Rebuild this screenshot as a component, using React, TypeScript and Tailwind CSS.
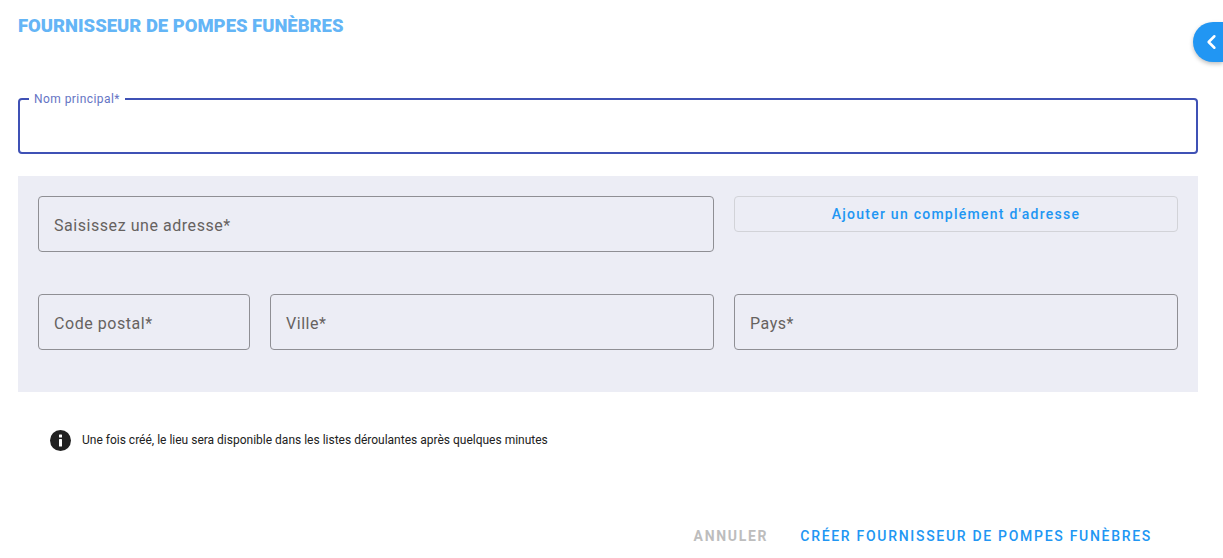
import { ChevronLeft } from "lucide-react";

function Field({ label, className }: { label: string; className: string }) {
  return (
    <div
      className={`h-14 border border-[#8f8f94] rounded pl-[15px] pt-1 flex items-center text-base tracking-[0.55px] text-[#66625f] ${className}`}
    >
      {label}
    </div>
  );
}

export default function App() {
  return (
    <div className="relative h-[558px] overflow-hidden bg-white pl-[18px] pr-[25px] font-['Roboto',sans-serif]">
      <button className="absolute right-0 top-[22px] w-[30px] h-10 rounded-l-full bg-[#2196f3] text-white flex items-center pl-[7px] shadow-[0_2px_4px_rgba(0,0,0,0.25)]">
        <ChevronLeft size={28} strokeWidth={2.6} />
      </button>

      <h1 className="pt-[14px] text-[18.45px] leading-[24px] font-black text-[#64b5f6]">
        FOURNISSEUR DE POMPES FUNÈBRES
      </h1>

      <div className="relative mt-[60px] h-14 border-2 border-[#3f51b5] rounded">
        <span className="absolute left-[9px] -top-[8px] bg-white px-[5px] text-xs leading-[14px] tracking-[0.44px] text-[#6574c4]">
          Nom principal*
        </span>
      </div>

      <div className="mt-[22px] h-[216px] bg-[#ecedf5] p-5">
        <div className="flex gap-5">
          <Field label="Saisissez une adresse*" className="w-[676px]" />
          <button className="h-9 w-[444px] border border-[#d2d3d8] rounded text-sm font-medium tracking-[1.25px] text-[#2196f3]">
            Ajouter un complément d'adresse
          </button>
        </div>
        <div className="flex gap-5 mt-[42px]">
          <Field label="Code postal*" className="w-[212px]" />
          <Field label="Ville*" className="w-[444px]" />
          <Field label="Pays*" className="w-[444px]" />
        </div>
      </div>

      <div className="flex items-center gap-[11px] mt-[37px] ml-[32px] text-xs leading-[22px] text-[#212121]">
        <svg width="21" height="21" viewBox="0 0 21 21">
          <circle cx="10.5" cy="10.5" r="10.5" fill="#212121" />
          <rect x="9" y="4.5" width="3" height="3" rx="0.5" fill="#fff" />
          <rect x="9" y="9" width="3" height="7.5" rx="0.5" fill="#fff" />
        </svg>
        <span>Une fois créé, le lieu sera disponible dans les listes déroulantes après quelques minutes</span>
      </div>

      <div className="flex justify-end items-center gap-[32px] mt-[73px] pr-[46px] text-sm leading-[24px] font-medium tracking-[1.7px]">
        <span className="font-bold text-[#bdbdbd]">ANNULER</span>
        <span className="text-[#2196f3]">CRÉER FOURNISSEUR DE POMPES FUNÈBRES</span>
      </div>
    </div>
  );
}
